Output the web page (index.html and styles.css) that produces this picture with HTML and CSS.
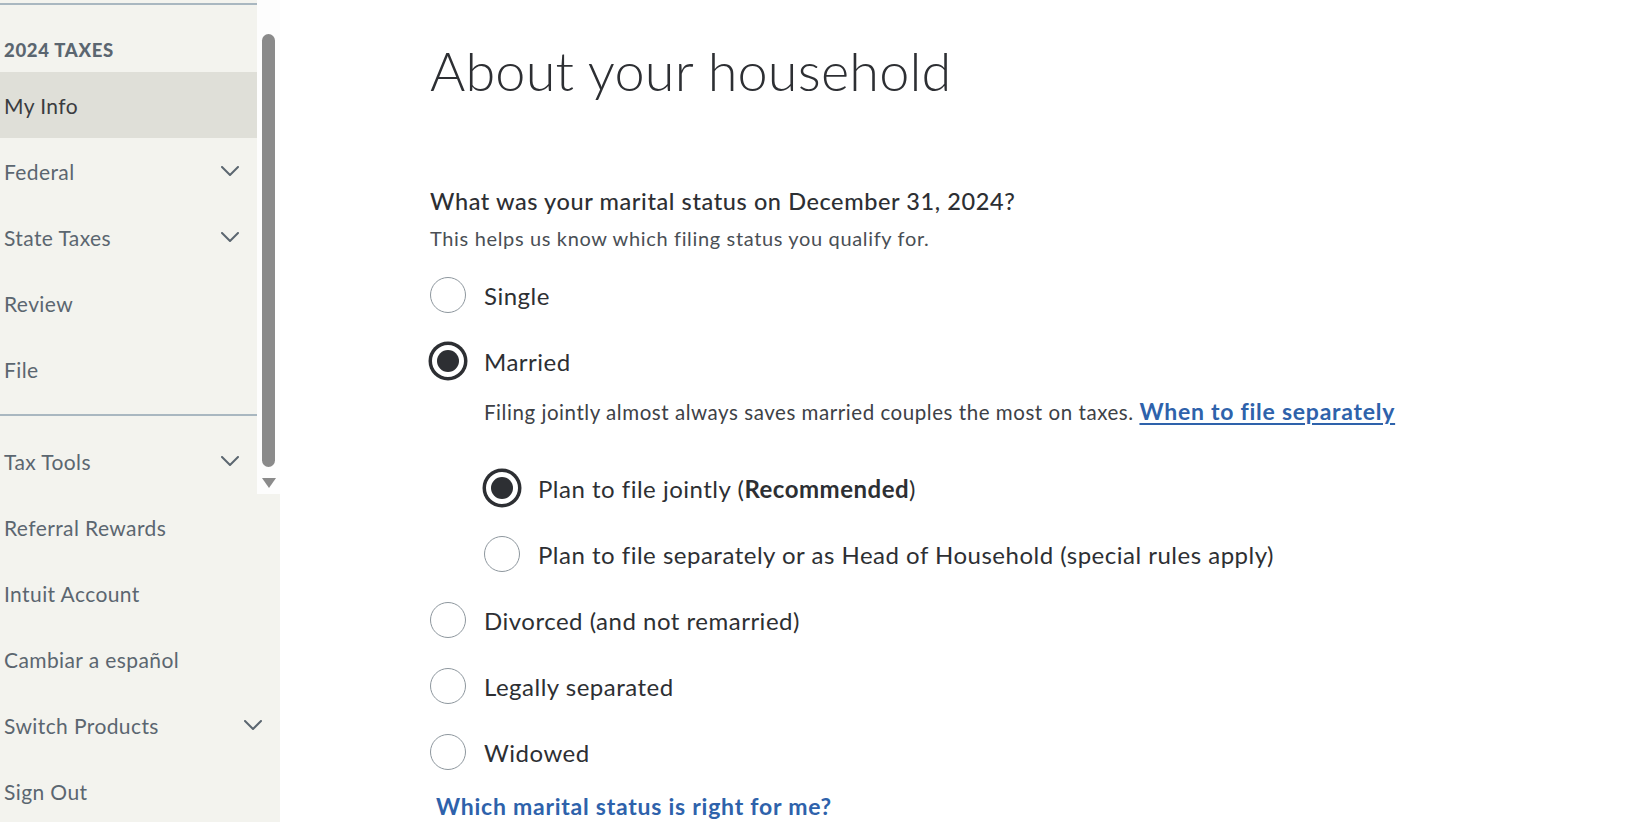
FILE: index.html
```html
<!DOCTYPE html>
<html lang="en">
<head>
<meta charset="utf-8">
<title>About your household</title>
<link rel="stylesheet" href="styles.css">
</head>
<body>
<div class="app">
  <aside class="sidebar">
    <div class="scroll-area">
      <nav class="upper">
        <div class="section-title">2024 TAXES</div>
        <ul class="nav-list">
          <li class="nav-item active"><span>My Info</span></li>
          <li class="nav-item"><span>Federal</span><svg class="chev" viewBox="0 0 18 10"><path d="M1 1l8 8 8-8"/></svg></li>
          <li class="nav-item"><span>State Taxes</span><svg class="chev" viewBox="0 0 18 10"><path d="M1 1l8 8 8-8"/></svg></li>
          <li class="nav-item"><span>Review</span></li>
          <li class="nav-item"><span>File</span></li>
        </ul>
        <div class="divider"></div>
        <ul class="nav-list">
          <li class="nav-item"><span>Tax Tools</span><svg class="chev" viewBox="0 0 18 10"><path d="M1 1l8 8 8-8"/></svg></li>
        </ul>
      </nav>
      <div class="scrollbar">
        <div class="thumb"></div>
        <div class="arrow"></div>
      </div>
    </div>
    <ul class="nav-list lower">
      <li class="nav-item"><span>Referral Rewards</span></li>
      <li class="nav-item"><span>Intuit Account</span></li>
      <li class="nav-item"><span>Cambiar a español</span></li>
      <li class="nav-item"><span>Switch Products</span><svg class="chev" viewBox="0 0 18 10"><path d="M1 1l8 8 8-8"/></svg></li>
      <li class="nav-item"><span>Sign Out</span></li>
    </ul>
  </aside>

  <main class="main">
    <h1 class="title">About your household</h1>
    <p class="question">What was your marital status on December 31, 2024?</p>
    <p class="hint">This helps us know which filing status you qualify for.</p>

    <div class="options">
      <div class="option"><span class="radio"></span><span class="label">Single</span></div>
      <div class="option"><span class="radio checked"></span><span class="label">Married</span></div>
      <div class="nested">
        <p class="note">Filing jointly almost always saves married couples the most on taxes. <a class="inline-link" href="#">When to file separately</a></p>
        <div class="nested-options">
          <div class="option"><span class="radio checked"></span><span class="label">Plan to file jointly (<b>Recommended</b>)</span></div>
          <div class="option"><span class="radio"></span><span class="label">Plan to file separately or as Head of Household (special rules apply)</span></div>
        </div>
      </div>
      <div class="option"><span class="radio"></span><span class="label">Divorced (and not remarried)</span></div>
      <div class="option"><span class="radio"></span><span class="label">Legally separated</span></div>
      <div class="option"><span class="radio"></span><span class="label">Widowed</span></div>
    </div>
    <a class="help-link" href="#">Which marital status is right for me?</a>
  </main>
</div>
</body>
</html>
```

FILE: styles.css
```css
* { box-sizing: border-box; }
html, body { margin: 0; padding: 0; }
body {
  font-family: "Lato", "Noto Sans", sans-serif;
  background: #ffffff;
  color: #2d2f33;
  height: 822px;
  overflow: hidden;
}
.app { display: flex; height: 822px; }

/* Sidebar */
.sidebar {
  width: 280px;
  flex: 0 0 280px;
  background: #f3f3ee;
  display: flex;
  flex-direction: column;
}
.scroll-area { display: flex; height: 494px; }
.upper {
  width: 257px;
  flex: 0 0 257px;
  padding-top: 3px;
}
.upper::before {
  content: "";
  display: block;
  height: 2px;
  background: #a9b7c0;
}
.section-title {
  padding: 36px 0 12px 4px;
  font-size: 18.5px;
  line-height: 19px;
  font-weight: 900;
  color: #5b6670;
  letter-spacing: 0.7px;
}
.nav-list { list-style: none; margin: 0; padding: 0; }
.nav-item {
  height: 66px;
  display: flex;
  align-items: center;
  justify-content: space-between;
  padding: 0 18px 0 4px;
  font-size: 21px;
  letter-spacing: 0.4px;
  color: #5b6670;
}
.nav-item.active { background: #dfdfd8; color: #3a3c40; }
.chev { width: 18px; height: 10px; }
.chev path { fill: none; stroke: #5b6670; stroke-width: 2; stroke-linecap: round; stroke-linejoin: round; }
.divider {
  height: 2px;
  background: #a9b7c0;
  margin: 12px 0;
}
.scrollbar {
  width: 23px;
  flex: 0 0 23px;
  background: #fdfdfd;
  padding: 34px 0 0 5px;
  display: flex;
  flex-direction: column;
  gap: 11px;
}
.thumb {
  width: 13px;
  height: 433px;
  background: #8a8a8a;
  border-radius: 7px;
}
.arrow {
  width: 0;
  height: 0;
  border-left: 7px solid transparent;
  border-right: 7px solid transparent;
  border-top: 10px solid #8a8a8a;
}
.lower { width: 280px; }

/* Main */
.main {
  flex: 1;
  padding: 38px 0 0 150px;
}
.title {
  margin: 0;
  font-size: 54px;
  line-height: 66px;
  font-weight: 300;
  color: #2d2f33;
  letter-spacing: 0.2px;
}
.question {
  margin: 82px 0 0;
  font-size: 23.5px;
  line-height: 30px;
  font-weight: 500;
  letter-spacing: 0.6px;
  color: #2d2f33;
}
.hint {
  margin: 9px 0 0;
  font-size: 20px;
  line-height: 26px;
  letter-spacing: 0.65px;
  color: #4a4f55;
}
.options { margin-top: 11px; }
.option {
  height: 66px;
  display: flex;
  align-items: center;
  gap: 18px;
}
.radio {
  position: relative;
  width: 36px;
  height: 36px;
  flex: 0 0 36px;
  border: 1px solid #8e979e;
  border-radius: 50%;
  background: #fff;
}
.radio.checked {
  border: 2px solid #2d2f33;
  box-shadow: 0 0 0 1.5px #2d2f33;
}
.radio.checked::after {
  content: "";
  position: absolute;
  top: 5px;
  left: 5px;
  width: 22px;
  height: 22px;
  border-radius: 50%;
  background: #2d2f33;
}
.label {
  font-size: 24px;
  letter-spacing: 0.5px;
  color: #2d2f33;
}
.label b { font-weight: 700; }
.nested { padding-left: 54px; }
.note {
  margin: 4px 0 0;
  font-size: 20.5px;
  line-height: 26px;
  letter-spacing: 0.55px;
  color: #3d4146;
}
.inline-link {
  color: #2e62ab;
  font-weight: 700;
  font-size: 23px;
  letter-spacing: 0.75px;
  text-decoration: underline;
  text-decoration-thickness: 2px;
  text-underline-offset: 3px;
}
.nested-options { margin-top: 30px; }
.help-link {
  display: block;
  margin: 8px 0 0 6px;
  font-size: 23px;
  line-height: 26px;
  font-weight: 700;
  letter-spacing: 0.75px;
  color: #2e62ab;
  text-decoration: none;
}
```
